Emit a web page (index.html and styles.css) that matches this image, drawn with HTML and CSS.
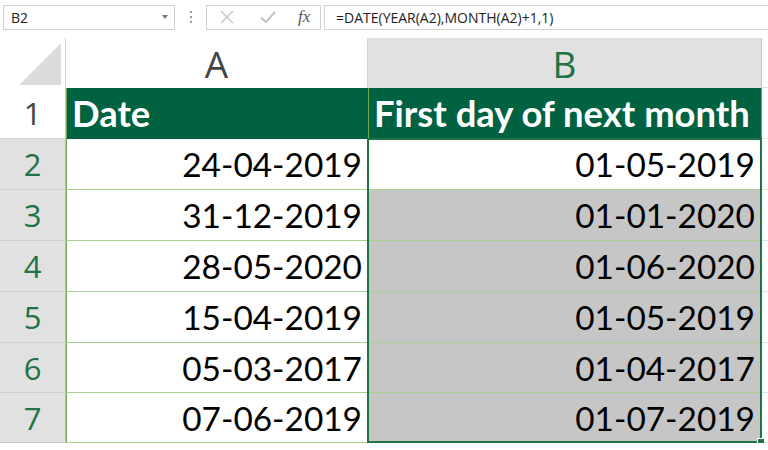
FILE: index.html
```html
<!DOCTYPE html>
<html lang="en">
<head>
  <meta charset="UTF-8" />
  <title>First day of next month</title>
  <link rel="stylesheet" href="styles.css">
</head>
<body>
  <div class="toolbar">
    <div class="name-box">
      <span>B2</span>
      <span class="caret"></span>
    </div>
    <div class="dots"><i></i><i></i><i></i></div>
    <div class="buttons">
      <svg class="btn" width="16" height="16" viewBox="0 0 16 16"><path d="M2 2L14 14M14 2L2 14" stroke="#c3c3c3" stroke-width="1.4" fill="none"/></svg>
      <svg class="btn" width="18" height="16" viewBox="0 0 18 16"><path d="M2 8.5L7 13L16 3" stroke="#c3c3c3" stroke-width="2" fill="none"/></svg>
      <span class="fx">fx</span>
    </div>
    <div class="formula">=DATE(YEAR(A2),MONTH(A2)+1,1)</div>
  </div>

  <div class="sheet">
    <div class="corner"><span class="tri"></span></div>
    <div class="col-head">A</div>
    <div class="col-head sel">B</div>
    <div class="spare head-spare"></div>

    <div class="row-head">1</div>
    <div class="cell title">Date</div>
    <div class="cell title last">First day of next month</div>
    <div class="spare"></div>

    <div class="row-head sel">2</div>
    <div class="cell num">24-04-2019</div>
    <div class="cell num last">01-05-2019</div>
    <div class="spare"></div>

    <div class="row-head sel">3</div>
    <div class="cell num">31-12-2019</div>
    <div class="cell num last shade">01-01-2020</div>
    <div class="spare"></div>

    <div class="row-head sel">4</div>
    <div class="cell num">28-05-2020</div>
    <div class="cell num last shade">01-06-2020</div>
    <div class="spare"></div>

    <div class="row-head sel">5</div>
    <div class="cell num">15-04-2019</div>
    <div class="cell num last shade">01-05-2019</div>
    <div class="spare"></div>

    <div class="row-head sel">6</div>
    <div class="cell num">05-03-2017</div>
    <div class="cell num last shade">01-04-2017</div>
    <div class="spare"></div>

    <div class="row-head sel">7</div>
    <div class="cell num">07-06-2019</div>
    <div class="cell num last shade">01-07-2019</div>
    <div class="spare"></div>

    <div class="selection"><span class="handle"></span></div>
  </div>
</body>
</html>
```

FILE: styles.css
```css
body {
  margin: 0;
  padding: 0;
  background: #fff;
  font-family: 'Open Sans', 'Noto Sans', sans-serif;
  overflow: hidden;
}

.toolbar {
  display: flex;
  align-items: center;
  height: 38px;
  padding-bottom: 4px;
  box-sizing: border-box;
  font-size: 14px;
  color: #222;
}

.name-box {
  display: flex;
  align-items: center;
  justify-content: space-between;
  margin-left: 3px;
  width: 172px;
  height: 25px;
  padding: 0 6px 0 7px;
  box-sizing: border-box;
  border: 1px solid #d0d0d0;
}

.caret {
  width: 0;
  height: 0;
  border-left: 3.5px solid transparent;
  border-right: 3.5px solid transparent;
  border-top: 4px solid #777;
}

.dots {
  display: flex;
  flex-direction: column;
  gap: 3px;
  margin: 0 14px 0 15px;
}

.dots i {
  display: block;
  width: 2px;
  height: 2px;
  background: #9a9a9a;
}

.buttons {
  display: flex;
  align-items: center;
  width: 115px;
  height: 25px;
  box-sizing: border-box;
  border: 1px solid #d0d0d0;
  padding-left: 12px;
  gap: 24px;
}

.fx {
  font-family: 'Liberation Serif', serif;
  font-style: italic;
  font-size: 17px;
  color: #555;
  margin-left: -3px;
}

.formula {
  flex: 1;
  height: 25px;
  margin-left: 3px;
  padding-left: 11px;
  line-height: 23px;
  box-sizing: border-box;
  border: 1px solid #d0d0d0;
  border-right: none;
}

.sheet {
  display: grid;
  grid-template-columns: 66px 302px 394px 6px;
  grid-template-rows: 50px 51px 51px 51px 51px 51px 50px 50px;
  position: relative;
}

.corner {
  position: relative;
  border-right: 1px solid #d4d4d4;
  box-sizing: border-box;
}

.tri {
  position: absolute;
  right: 4px;
  bottom: 3px;
  width: 0;
  height: 0;
  border-left: 42px solid transparent;
  border-bottom: 42px solid #dcdcdc;
}

.col-head {
  display: flex;
  align-items: center;
  justify-content: center;
  font-size: 37px;
  color: #444;
  border-right: 1px solid #d4d4d4;
  box-sizing: border-box;
}

.col-head.sel {
  background: #e1e1e1;
  color: #217346;
  border-right: 1px solid #c6c6c6;
}

.head-spare {
  border-bottom: 1px solid #d4d4d4;
}

.row-head {
  display: flex;
  align-items: center;
  justify-content: center;
  font-size: 31px;
  color: #444;
  border-right: 1px solid #c6c6c6;
  border-bottom: 1px solid #d4d4d4;
  box-sizing: border-box;
}

.row-head.sel {
  background: #e1e1e1;
  color: #217346;
  border-bottom: 1px solid #cfcfcf;
  border-right: 1px solid #bdbdbd;
}

.cell {
  display: flex;
  align-items: center;
  font-family: Lato, 'Open Sans', sans-serif;
  font-size: 33.4px;
  color: #000;
  white-space: nowrap;
  box-sizing: border-box;
  border-left: 1px solid #6aa84f;
  border-bottom: 1px solid #a9d08e;
}

.cell.title {
  background: #006241;
  color: #fff;
  font-weight: bold;
  font-size: 36.4px;
  padding-left: 5px;
  border-bottom: 1px solid #006241;
}

.cell.num {
  justify-content: flex-end;
  padding-right: 6px;
}

.cell.last {
  border-right: 1px solid #6aa84f;
}

.cell.shade {
  background: #c6c6c6;
}

.spare {
  border-bottom: 1px solid #e2e2e2;
}

/* selection outline over B2:B7 */
.selection {
  position: absolute;
  left: 367px;
  top: 100px;
  width: 395px;
  height: 305px;
  box-sizing: border-box;
  border: 2px solid #217346;
  pointer-events: none;
}

.handle {
  position: absolute;
  right: -5px;
  bottom: -5px;
  width: 6px;
  height: 6px;
  background: #217346;
  border: 1px solid #fff;
}
```
